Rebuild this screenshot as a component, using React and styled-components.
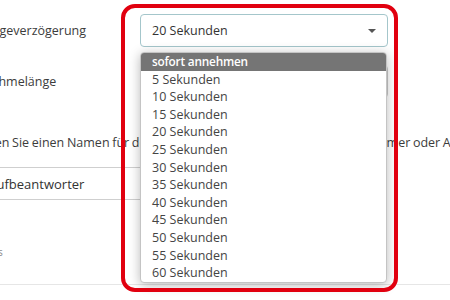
import styled, { createGlobalStyle } from "styled-components";

const GlobalStyle = createGlobalStyle`
  body {
    margin: 0;
    background: #fff;
    font-family: "Open Sans", "Liberation Sans", sans-serif;
    color: #3a3a3a;
  }
`;

const Page = styled.div`
  position: relative;
  width: 450px;
  height: 300px;
  overflow: hidden;
  background: #fff;
`;

const Form = styled.div`
  margin-left: -29px;
  padding-top: 14px;
  width: 520px;
  font-size: 12px;
`;

const Row = styled.div`
  display: grid;
  grid-template-columns: 169px 248px;
  align-items: center;
  height: 33px;
  margin-bottom: ${(p) => p.$gap || 0}px;
`;

const Label = styled.div`
  font-size: 12.5px;
  color: #3c3c3c;
  margin-left: ${(p) => p.$shift || 0}px;
`;

const Select = styled.div`
  height: 33px;
  box-sizing: border-box;
  border: 1px solid ${(p) => (p.$focus ? "#a4c6cb" : "#c9c9c9")};
  border-radius: 4px;
  padding: 0 11px;
  display: flex;
  align-items: center;
  justify-content: space-between;
  font-size: 12.5px;
  color: #333;
`;

const Caret = styled.span`
  width: 0;
  height: 0;
  border-left: 4px solid transparent;
  border-right: 4px solid transparent;
  border-top: 4px solid #555;
`;

const Hint = styled.p`
  margin: 36px 0 0;
  white-space: nowrap;
  font-size: 12.5px;
  word-spacing: -0.6px;
  color: #3c3c3c;
`;

const Input = styled.div`
  margin-top: 16px;
  width: 414px;
  height: 33px;
  box-sizing: border-box;
  border: 1px solid #cfcfcf;
  border-radius: 3px;
  padding: 0 3px;
  display: flex;
  align-items: center;
  font-size: 13px;
  color: #333;
`;

const Small = styled.div`
  margin-top: 45px;
  font-size: 10px;
  color: #8a8a8a;
`;

const Divider = styled.hr`
  margin: 25px 0 0;
  border: 0;
  border-top: 1px solid #e6e6e6;
  width: 520px;
`;

const Menu = styled.ul`
  position: absolute;
  left: 140px;
  top: 52px;
  width: 245px;
  margin: 0;
  padding: 0;
  list-style: none;
  background: #fff;
  border: 1px solid #c4c4c4;
  border-radius: 4px;
  box-shadow: 0 2px 12px rgba(0, 0, 0, 0.28);
  overflow: hidden;
`;

const Option = styled.li`
  height: 17.6px;
  line-height: 17.6px;
  padding-left: 11px;
  font-size: ${(p) => (p.$active ? 11.8 : 12.5)}px;
  color: ${(p) => (p.$active ? "#fff" : "#444")};
  background: ${(p) => (p.$active ? "#757575" : "transparent")};
  font-weight: ${(p) => (p.$active ? 600 : 400)};
  letter-spacing: ${(p) => (p.$active ? -0.2 : 0)}px;
`;

const Highlight = styled.div`
  position: absolute;
  left: 121px;
  top: 4px;
  width: 277px;
  height: 288px;
  box-sizing: border-box;
  border: 4px solid #e1000f;
  border-radius: 14px;
  pointer-events: none;
`;

const options = [
  "sofort annehmen",
  "5 Sekunden",
  "10 Sekunden",
  "15 Sekunden",
  "20 Sekunden",
  "25 Sekunden",
  "30 Sekunden",
  "35 Sekunden",
  "40 Sekunden",
  "45 Sekunden",
  "50 Sekunden",
  "55 Sekunden",
  "60 Sekunden",
];

export default function App() {
  return (
    <>
      <GlobalStyle />
      <Page>
        <Form>
          <Row $gap={18}>
            <Label>Ansageverzögerung</Label>
            <Select $focus>
              20 Sekunden
              <Caret />
            </Select>
          </Row>
          <Row>
            <Label $shift={-7}>Aufnahmelänge</Label>
            <Select>
              120 Sekunden
              <Caret />
            </Select>
          </Row>
          <Hint>
            Geben Sie einen Namen für den Anrufbeantworter ein, z. B. Ihre
            Rufnummer oder Ansage
          </Hint>
          <Input>Anrufbeantworter</Input>
          <Small>Details</Small>
          <Divider />
        </Form>
        <Menu>
          {options.map((o, i) => (
            <Option key={o} $active={i === 0}>
              {o}
            </Option>
          ))}
        </Menu>
        <Highlight />
      </Page>
    </>
  );
}
